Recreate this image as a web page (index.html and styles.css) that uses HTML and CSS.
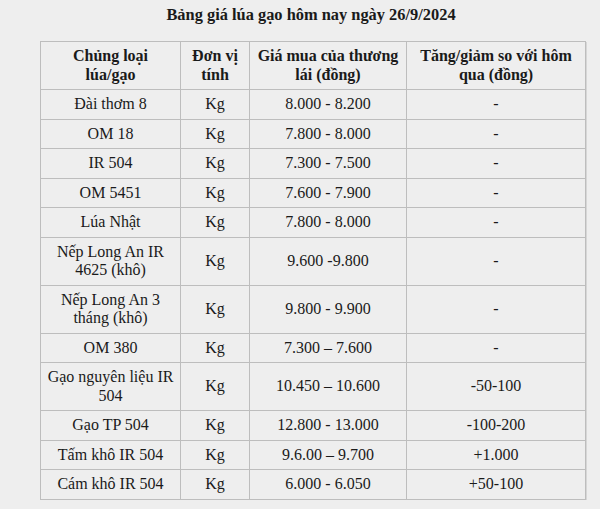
FILE: index.html
```html
<!DOCTYPE html>
<html lang="vi">
<head>
<meta charset="utf-8">
<link rel="stylesheet" href="styles.css">
</head>
<body>
<div class="page">
  <h1 class="title">Bảng giá lúa gạo hôm nay ngày 26/9/2024</h1>
  <table class="prices">
    <colgroup>
      <col class="c1"><col class="c2"><col class="c3"><col class="c4">
    </colgroup>
    <thead>
      <tr>
        <th>Chủng loại<br>lúa/gạo</th>
        <th>Đơn vị<br>tính</th>
        <th>Giá mua của thương<br>lái (đồng)</th>
        <th>Tăng/giảm so với hôm<br>qua (đồng)</th>
      </tr>
    </thead>
    <tbody>
      <tr><td>Đài thơm 8</td><td>Kg</td><td>8.000 - 8.200</td><td>-</td></tr>
      <tr><td>OM 18</td><td>Kg</td><td>7.800 - 8.000</td><td>-</td></tr>
      <tr><td>IR 504</td><td>Kg</td><td>7.300 - 7.500</td><td>-</td></tr>
      <tr><td>OM 5451</td><td>Kg</td><td>7.600 - 7.900</td><td>-</td></tr>
      <tr><td>Lúa Nhật</td><td>Kg</td><td>7.800 - 8.000</td><td>-</td></tr>
      <tr><td>Nếp Long An IR<br>4625 (khô)</td><td>Kg</td><td>9.600 -9.800</td><td>-</td></tr>
      <tr><td>Nếp Long An 3<br>tháng (khô)</td><td>Kg</td><td>9.800 - 9.900</td><td>-</td></tr>
      <tr><td>OM 380</td><td>Kg</td><td>7.300 – 7.600</td><td>-</td></tr>
      <tr><td>Gạo nguyên liệu IR<br>504</td><td>Kg</td><td>10.450 – 10.600</td><td>-50-100</td></tr>
      <tr><td>Gạo TP 504</td><td>Kg</td><td>12.800 - 13.000</td><td>-100-200</td></tr>
      <tr><td>Tấm khô IR 504</td><td>Kg</td><td>9.6.00 – 9.700</td><td>+1.000</td></tr>
      <tr><td>Cám khô IR 504</td><td>Kg</td><td>6.000 - 6.050</td><td>+50-100</td></tr>
    </tbody>
  </table>
</div>
</body>
</html>
```

FILE: styles.css
```css
html, body {
  margin: 0;
  padding: 0;
  background: #eeeeee;
}
.page {
  padding: 6px 15px 0 40px;
  font-family: "Liberation Serif", "Times New Roman", serif;
  color: #1a1a1a;
}
.title {
  margin: 0 0 17px 0;
  font-size: 16.4px;
  line-height: 18px;
  font-weight: bold;
  text-align: center;
  width: 542px;
}
.prices {
  width: 545px;
  border-collapse: collapse;
  table-layout: fixed;
  border: 1px solid #b9b9b9;
  box-shadow: 1px 1px 0 #d6d6d6;
  font-size: 16px;
  line-height: 18.5px;
}
.c1 { width: 140px; }
.c2 { width: 69px; }
.c3 { width: 157px; }
.c4 { width: 179px; }
.prices th,
.prices td {
  border: 1px solid #bdbdbd;
  padding: 5px 4px;
  text-align: center;
  vertical-align: middle;
  white-space: nowrap;
}
.prices th {
  font-weight: bold;
}
```
